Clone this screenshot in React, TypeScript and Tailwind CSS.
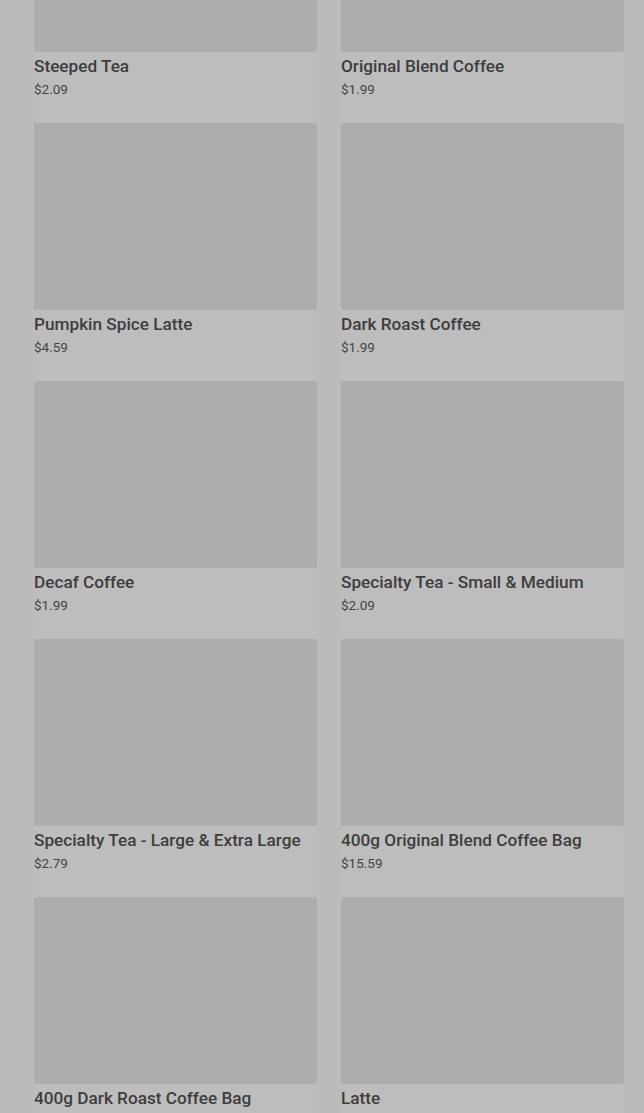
import type React from "react"

interface Product {
  name: string
  price: string
}

const products: Product[] = [
  { name: "Steeped Tea", price: "$2.09" },
  { name: "Original Blend Coffee", price: "$1.99" },
  { name: "Pumpkin Spice Latte", price: "$4.59" },
  { name: "Dark Roast Coffee", price: "$1.99" },
  { name: "Decaf Coffee", price: "$1.99" },
  { name: "Specialty Tea - Small & Medium", price: "$2.09" },
  { name: "Specialty Tea - Large & Extra Large", price: "$2.79" },
  { name: "400g Original Blend Coffee Bag", price: "$15.59" },
  { name: "400g Dark Roast Coffee Bag", price: "$15.59" },
  { name: "Latte", price: "$3.29" },
]

const ProductCard: React.FC<{ product: Product }> = ({ product }) => (
  <div className="flex flex-col bg-[#bdbdbd] pb-[23px]">
    <div className="h-[187px] w-full rounded-[2px] bg-[#adadad]" />
    <h3 className="mt-[2px] text-[17.2px] leading-[24px] font-medium text-[#3d3d3d]">
      {product.name}
    </h3>
    <p className="mt-[1px] text-[13.5px] leading-[21px] text-[#444444]">{product.price}</p>
  </div>
)

const App: React.FC = () => {
  return (
    <div
      className="min-h-screen overflow-hidden bg-[#bbbbbb]"
      style={{ fontFamily: "Roboto, 'Liberation Sans', sans-serif" }}
    >
      <div className="mt-[-135px] grid grid-cols-2 gap-x-[24px] pl-[34px] pr-[20px]">
        {products.map((product, index) => (
          <ProductCard key={index} product={product} />
        ))}
      </div>
    </div>
  )
}

export default App
